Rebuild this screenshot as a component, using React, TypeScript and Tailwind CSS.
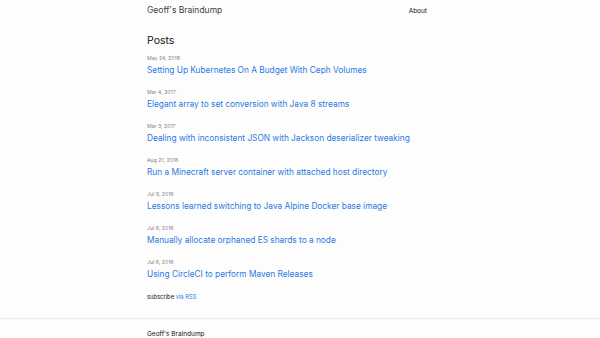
const posts = [
  { date: 'May 24, 2018', title: 'Setting Up Kubernetes On A Budget With Ceph Volumes' },
  { date: 'Mar 4, 2017', title: 'Elegant array to set conversion with Java 8 streams' },
  { date: 'Mar 3, 2017', title: 'Dealing with inconsistent JSON with Jackson deserializer tweaking' },
  { date: 'Aug 21, 2016', title: 'Run a Minecraft server container with attached host directory' },
  { date: 'Jul 9, 2016', title: 'Lessons learned switching to Java Alpine Docker base image' },
  { date: 'Jul 6, 2016', title: 'Manually allocate orphaned ES shards to a node' },
  { date: 'Jul 6, 2016', title: 'Using CircleCI to perform Maven Releases' },
];

export default function App() {
  return (
    <div className="min-h-screen bg-[#fdfdfd] text-[#111] font-['Inter','Liberation_Sans',sans-serif]">
      {/* Header */}
      <header className="w-[280px] ml-[147px] pt-[5px] flex justify-between items-start">
        <span className="text-[8.5px] leading-[11px] text-[#424242]">Geoff's Braindump</span>
        <a className="text-[6.5px] leading-[10px] text-[#111] mt-[1px]">About</a>
      </header>

      {/* Posts */}
      <main className="w-[280px] ml-[147px] pt-[18px]">
        <h1 className="text-[10.5px] leading-[14px] mb-[6px]">Posts</h1>
        <ul className="flex flex-col gap-[12px]">
          {posts.map((post, index) => (
            <li key={index} className="flex flex-col">
              <span className="text-[5.2px] leading-[8px] text-[#828282]">{post.date}</span>
              <a className="text-[8.3px] leading-[11px] mt-[3px] text-[#2a7ae2]">{post.title}</a>
            </li>
          ))}
        </ul>
        <p className="text-[5.8px] leading-[10px] mt-[12px]">
          subscribe <a className="text-[#2a7ae2]">via RSS</a>
        </p>
      </main>

      {/* Footer */}
      <footer className="mt-[16px] border-t border-[#ebebeb] pt-[10px]">
        <div className="w-[280px] ml-[147px] text-[6.5px] leading-[10px]">Geoff's Braindump</div>
      </footer>
    </div>
  );
}
